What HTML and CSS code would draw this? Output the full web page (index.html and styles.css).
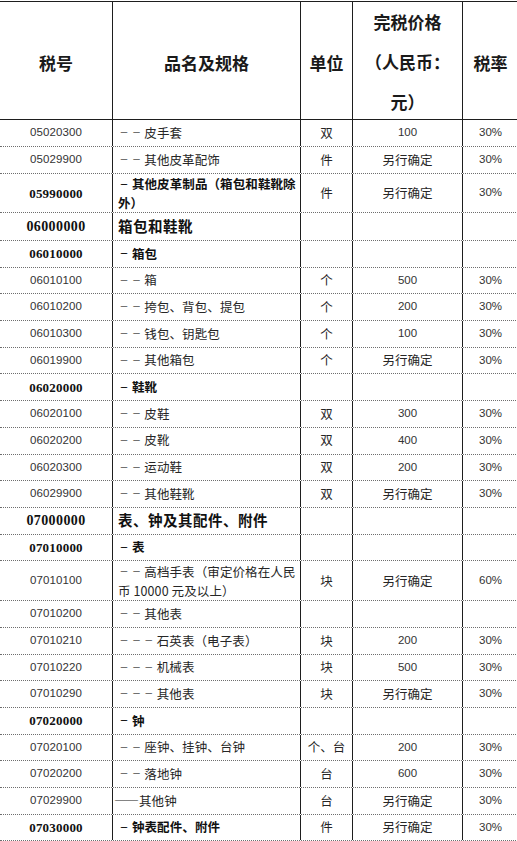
FILE: index.html
```
<!DOCTYPE html>
<html lang="zh-CN">
<head>
<meta charset="utf-8">
<title>完税价格表</title>
<link rel="stylesheet" href="styles.css">
</head>
<body>
<div class="sheet">
  <div class="row head">
    <div class="c">税号</div>
    <div class="c">品名及规格</div>
    <div class="c">单位</div>
    <div class="c price-head">完税价格<br>（人民币：<br>元）</div>
    <div class="c">税率</div>
  </div>

  <div class="row r27">
    <div class="c code">05020300</div><div class="c name"><span class="txt"><span class="lead">－－</span>皮手套</span></div><div class="c">双</div><div class="c num">100</div><div class="c num">30%</div>
  </div>
  <div class="row r27">
    <div class="c code">05029900</div><div class="c name"><span class="txt"><span class="lead">－－</span>其他皮革配饰</span></div><div class="c">件</div><div class="c">另行确定</div><div class="c num">30%</div>
  </div>
  <div class="row r39">
    <div class="c code b2">05990000</div><div class="c name bold two"><span class="txt"><span class="lead">－</span>其他皮革制品（箱包和鞋靴除<br>外）</span></div><div class="c">件</div><div class="c">另行确定</div><div class="c num">30%</div>
  </div>
  <div class="row r28">
    <div class="c code b1">06000000</div><div class="c name bold big"><span class="txt">箱包和鞋靴</span></div><div class="c"></div><div class="c"></div><div class="c"></div>
  </div>
  <div class="row">
    <div class="c code b2">06010000</div><div class="c name bold"><span class="txt"><span class="lead">－</span>箱包</span></div><div class="c"></div><div class="c"></div><div class="c"></div>
  </div>
  <div class="row">
    <div class="c code">06010100</div><div class="c name"><span class="txt"><span class="lead">－－</span>箱</span></div><div class="c">个</div><div class="c num">500</div><div class="c num">30%</div>
  </div>
  <div class="row">
    <div class="c code">06010200</div><div class="c name"><span class="txt"><span class="lead">－－</span>挎包、背包、提包</span></div><div class="c">个</div><div class="c num">200</div><div class="c num">30%</div>
  </div>
  <div class="row">
    <div class="c code">06010300</div><div class="c name"><span class="txt"><span class="lead">－－</span>钱包、钥匙包</span></div><div class="c">个</div><div class="c num">100</div><div class="c num">30%</div>
  </div>
  <div class="row">
    <div class="c code">06019900</div><div class="c name"><span class="txt"><span class="lead">－－</span>其他箱包</span></div><div class="c">个</div><div class="c">另行确定</div><div class="c num">30%</div>
  </div>
  <div class="row">
    <div class="c code b2">06020000</div><div class="c name bold"><span class="txt"><span class="lead">－</span>鞋靴</span></div><div class="c"></div><div class="c"></div><div class="c"></div>
  </div>
  <div class="row">
    <div class="c code">06020100</div><div class="c name"><span class="txt"><span class="lead">－－</span>皮鞋</span></div><div class="c">双</div><div class="c num">300</div><div class="c num">30%</div>
  </div>
  <div class="row">
    <div class="c code">06020200</div><div class="c name"><span class="txt"><span class="lead">－－</span>皮靴</span></div><div class="c">双</div><div class="c num">400</div><div class="c num">30%</div>
  </div>
  <div class="row">
    <div class="c code">06020300</div><div class="c name"><span class="txt"><span class="lead">－－</span>运动鞋</span></div><div class="c">双</div><div class="c num">200</div><div class="c num">30%</div>
  </div>
  <div class="row">
    <div class="c code">06029900</div><div class="c name"><span class="txt"><span class="lead">－－</span>其他鞋靴</span></div><div class="c">双</div><div class="c">另行确定</div><div class="c num">30%</div>
  </div>
  <div class="row">
    <div class="c code b1">07000000</div><div class="c name bold big"><span class="txt">表、钟及其配件、附件</span></div><div class="c"></div><div class="c"></div><div class="c"></div>
  </div>
  <div class="row">
    <div class="c code b2">07010000</div><div class="c name bold"><span class="txt"><span class="lead">－</span>表</span></div><div class="c"></div><div class="c"></div><div class="c"></div>
  </div>
  <div class="row r40">
    <div class="c code">07010100</div><div class="c name two"><span class="txt"><span class="lead">－－</span>高档手表（审定价格在人民<br>币 10000 元及以上）</span></div><div class="c">块</div><div class="c">另行确定</div><div class="c num">60%</div>
  </div>
  <div class="row">
    <div class="c code">07010200</div><div class="c name"><span class="txt"><span class="lead">－－</span>其他表</span></div><div class="c"></div><div class="c"></div><div class="c"></div>
  </div>
  <div class="row">
    <div class="c code">07010210</div><div class="c name"><span class="txt"><span class="lead">－－－</span>石英表（电子表）</span></div><div class="c">块</div><div class="c num">200</div><div class="c num">30%</div>
  </div>
  <div class="row">
    <div class="c code">07010220</div><div class="c name"><span class="txt"><span class="lead">－－－</span>机械表</span></div><div class="c">块</div><div class="c num">500</div><div class="c num">30%</div>
  </div>
  <div class="row">
    <div class="c code">07010290</div><div class="c name"><span class="txt"><span class="lead">－－－</span>其他表</span></div><div class="c">块</div><div class="c">另行确定</div><div class="c num">30%</div>
  </div>
  <div class="row">
    <div class="c code b2">07020000</div><div class="c name bold"><span class="txt"><span class="lead">－</span>钟</span></div><div class="c"></div><div class="c"></div><div class="c"></div>
  </div>
  <div class="row">
    <div class="c code">07020100</div><div class="c name"><span class="txt"><span class="lead">－－</span>座钟、挂钟、台钟</span></div><div class="c">个、台</div><div class="c num">200</div><div class="c num">30%</div>
  </div>
  <div class="row">
    <div class="c code">07020200</div><div class="c name"><span class="txt"><span class="lead">－－</span>落地钟</span></div><div class="c">台</div><div class="c num">600</div><div class="c num">30%</div>
  </div>
  <div class="row">
    <div class="c code">07029900</div><div class="c name dash"><span class="txt"><span class="emdash">——</span>其他钟</span></div><div class="c">台</div><div class="c">另行确定</div><div class="c num">30%</div>
  </div>
  <div class="row">
    <div class="c code b2">07030000</div><div class="c name bold"><span class="txt"><span class="lead">－</span>钟表配件、附件</span></div><div class="c">件</div><div class="c">另行确定</div><div class="c num">30%</div>
  </div>
</div>
</body>
</html>
```

FILE: styles.css
```
html, body {
  margin: 0;
  padding: 0;
  background: #ffffff;
}

body {
  font-family: "Noto Sans CJK SC", "Liberation Sans", sans-serif;
  color: #262626;
  font-size: 12.5px;
  overflow: hidden;
}

.sheet {
  width: 518px;
  margin-top: 1px;
  border-top: 1px solid #1e1e1e;
}

.row {
  display: grid;
  grid-template-columns: 113px 188px 52px 110px 55px;
  height: 26.7px;
  box-sizing: border-box;
  border-bottom: 1px dotted #6e6e6e;
}

.row.head {
  height: 118px;
  border-bottom: 1px solid #1e1e1e;
}

.row.r27 { height: 27px; }
.row.r28 { height: 28px; }
.row.r39 { height: 39px; }
.row.r40 { height: 40px; }

.c {
  box-sizing: border-box;
  border-right: 1px solid #1e1e1e;
  display: flex;
  align-items: center;
  justify-content: center;
  text-align: center;
  white-space: nowrap;
  line-height: 1;
}

.c:last-child {
  border-right: none;
}

.head .c {
  font-size: 17px;
  font-weight: 700;
  color: #1a1a1a;
}

.head .price-head {
  line-height: 40px;
}

.code {
  font-family: "Liberation Sans", "Noto Sans CJK SC", sans-serif;
  font-size: 11.5px;
  color: #333333;
  letter-spacing: 0.1px;
}

.code.b1 {
  font-family: "Liberation Serif", serif;
  font-weight: 700;
  font-size: 14px;
  letter-spacing: 0.4px;
  color: #111111;
}

.code.b2 {
  font-family: "Liberation Serif", serif;
  font-weight: 700;
  font-size: 13px;
  letter-spacing: 0.2px;
  color: #111111;
}

.num {
  font-family: "Liberation Sans", "Noto Sans CJK SC", sans-serif;
  font-size: 11.5px;
  color: #333333;
}

.name {
  justify-content: flex-start;
  text-align: left;
  padding-left: 5px;
  letter-spacing: 0.1px;
}

.txt {
  display: block;
}

.name.bold {
  font-weight: 700;
  font-size: 12.5px;
  color: #111111;
}

.name.big {
  font-size: 14.5px;
  letter-spacing: 0.5px;
}

.name.two .txt {
  line-height: 19px;
}

.lead {
  display: inline-block;
  font-size: 9px;
  letter-spacing: 3.4px;
  padding-left: 1.5px;
  vertical-align: 1.5px;
  line-height: 1;
}

.name.dash {
  padding-left: 1px;
}

.emdash {
  font-family: "Noto Sans CJK SC", sans-serif;
  font-weight: 700;
  letter-spacing: -1px;
  margin-right: 1px;
}
```
